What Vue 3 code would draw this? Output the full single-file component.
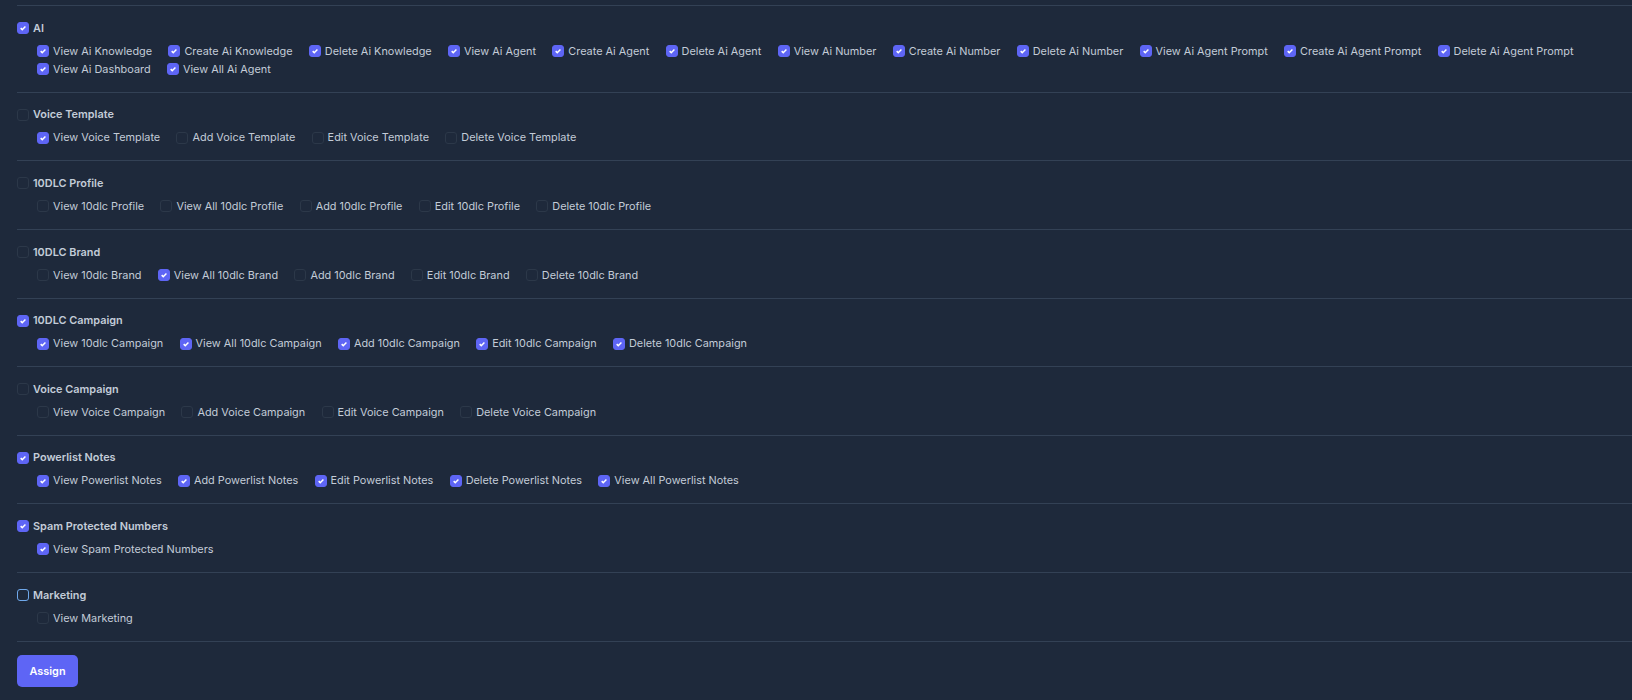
<script setup>
const groups = [
  { title: 'AI', on: true, items: [['View Ai Knowledge',1],['Create Ai Knowledge',1],['Delete Ai Knowledge',1],['View Ai Agent',1],['Create Ai Agent',1],['Delete Ai Agent',1],['View Ai Number',1],['Create Ai Number',1],['Delete Ai Number',1],['View Ai Agent Prompt',1],['Create Ai Agent Prompt',1],['Delete Ai Agent Prompt',1],['View Ai Dashboard',1],['View All Ai Agent',1]] },
  { title: 'Voice Template', on: false, items: [['View Voice Template',1],['Add Voice Template',0],['Edit Voice Template',0],['Delete Voice Template',0]] },
  { title: '10DLC Profile', on: false, items: [['View 10dlc Profile',0],['View All 10dlc Profile',0],['Add 10dlc Profile',0],['Edit 10dlc Profile',0],['Delete 10dlc Profile',0]] },
  { title: '10DLC Brand', on: false, items: [['View 10dlc Brand',0],['View All 10dlc Brand',1],['Add 10dlc Brand',0],['Edit 10dlc Brand',0],['Delete 10dlc Brand',0]] },
  { title: '10DLC Campaign', on: true, items: [['View 10dlc Campaign',1],['View All 10dlc Campaign',1],['Add 10dlc Campaign',1],['Edit 10dlc Campaign',1],['Delete 10dlc Campaign',1]] },
  { title: 'Voice Campaign', on: false, items: [['View Voice Campaign',0],['Add Voice Campaign',0],['Edit Voice Campaign',0],['Delete Voice Campaign',0]] },
  { title: 'Powerlist Notes', on: true, items: [['View Powerlist Notes',1],['Add Powerlist Notes',1],['Edit Powerlist Notes',1],['Delete Powerlist Notes',1],['View All Powerlist Notes',1]] },
  { title: 'Spam Protected Numbers', on: true, items: [['View Spam Protected Numbers',1]] },
  { title: 'Marketing', on: false, focus: true, items: [['View Marketing',0]] },
]
</script>

<template>
  <main class="page">
    <section v-for="g in groups" :key="g.title" class="group">
      <div class="head">
        <span class="box" :class="{ on: g.on, focus: g.focus }">
          <svg v-if="g.on" viewBox="0 0 12 12" class="tick"><path d="M3.2 6.2 5.1 8 8.9 4.2" /></svg>
        </span>
        <span class="title">{{ g.title }}</span>
      </div>
      <div class="items">
        <label v-for="it in g.items" :key="it[0]" class="item">
          <span class="box" :class="{ on: it[1] }">
            <svg v-if="it[1]" viewBox="0 0 12 12" class="tick"><path d="M3.2 6.2 5.1 8 8.9 4.2" /></svg>
          </span>
          <span class="label">{{ it[0] }}</span>
        </label>
      </div>
    </section>
    <div class="foot">
      <button class="assign">Assign</button>
    </div>
  </main>
</template>

<style>
html, body { margin: 0; background: #1e293b; }
</style>

<style scoped>
.page {
  box-sizing: border-box;
  height: 700px;
  padding: 5px 0 0 17px;
  background: #1e293b;
  font-family: Inter, "Liberation Sans", sans-serif;
  font-size: 10.88px;
  color: #c3ccd8;
  overflow: hidden;
}
.group {
  border-top: 1px solid #334155;
  padding: 16px 0 16.65px;
}
.head {
  display: flex;
  align-items: center;
  gap: 4px;
  height: 12px;
  margin-bottom: 11px;
}
.title { font-weight: 600; margin-bottom: 0.8px; }
.items {
  display: flex;
  flex-wrap: wrap;
  column-gap: 16.3px;
  row-gap: 6px;
  padding-left: 20px;
}
.item {
  display: flex;
  align-items: center;
  gap: 4px;
  height: 12px;
  white-space: nowrap;
}
.label { margin-bottom: 0.8px; }
.box {
  box-sizing: border-box;
  width: 12px;
  height: 12px;
  flex: none;
  border: 1px solid #2c3849;
  border-radius: 3px;
  background: #1e293b;
  display: flex;
}
.box.on {
  background: #5e65f5;
  border-color: #5e65f5;
}
.box.focus { border-color: #6fa8ea; }
.tick {
  width: 10px;
  height: 10px;
  fill: none;
  stroke: #fff;
  stroke-width: 1.8;
}
.foot {
  border-top: 1px solid #334155;
  padding-top: 13px;
}
.assign {
  display: block;
  width: 61px;
  height: 32px;
  border: 0;
  border-radius: 5px;
  background: #5e65f5;
  color: #fff;
  font: 600 10.88px Inter, "Liberation Sans", sans-serif;
}
</style>
